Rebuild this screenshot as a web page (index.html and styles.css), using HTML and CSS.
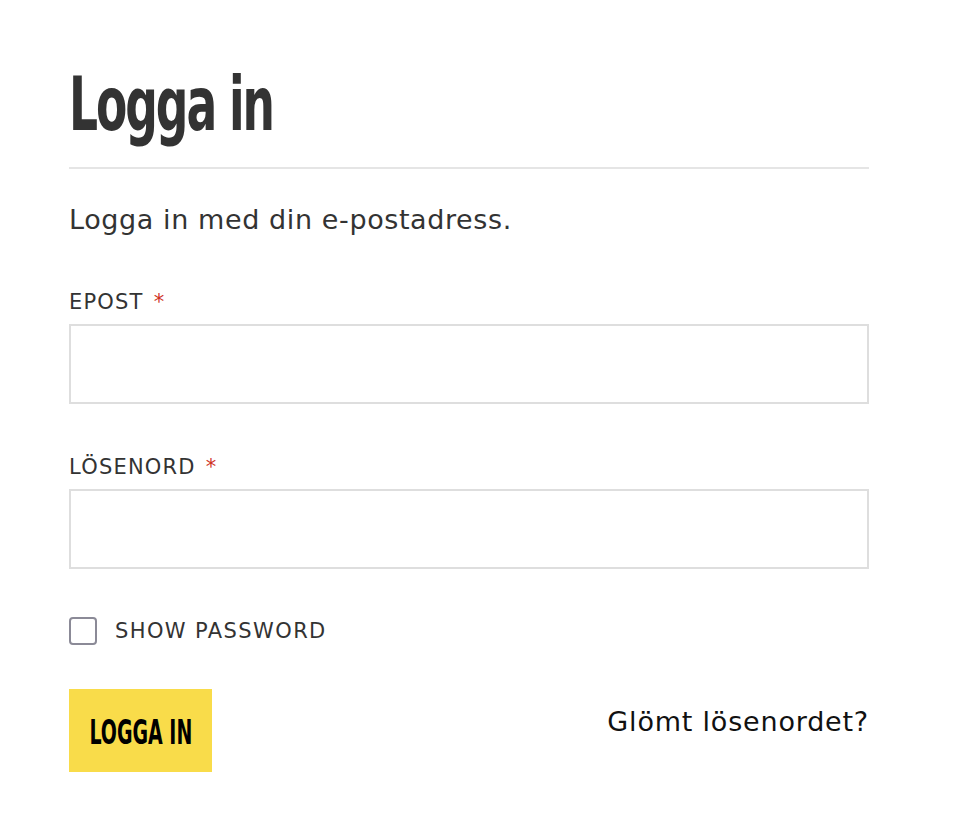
FILE: index.html
```html
<!DOCTYPE html>
<html lang="sv">
<head>
<meta charset="utf-8">
<title>Logga in</title>
<link rel="stylesheet" href="styles.css">
</head>
<body>
<main class="page">
  <h1 class="title"><span class="title-text">Logga in</span></h1>
  <hr class="divider">
  <p class="intro">Logga in med din e-postadress.</p>
  <form class="form">
    <div class="field">
      <label class="label" for="email">EPOST<span class="req">*</span></label>
      <input class="input" id="email" type="email">
    </div>
    <div class="field">
      <label class="label" for="pw">LÖSENORD<span class="req">*</span></label>
      <input class="input" id="pw" type="password">
    </div>
    <label class="check">
      <span class="box"></span>
      <span class="check-text">SHOW PASSWORD</span>
    </label>
    <div class="actions">
      <button class="btn" type="button"><span class="btn-text">LOGGA IN</span></button>
      <a class="forgot" href="#">Glömt lösenordet?</a>
    </div>
  </form>
</main>
</body>
</html>
```
FILE: styles.css
```css
html, body {
  margin: 0;
  padding: 0;
  background: #fff;
}
body {
  font-family: "DejaVu Sans", sans-serif;
  color: #333;
}
.page {
  width: 800px;
  padding: 56px 0 0 69px;
}
.title {
  margin: 0;
  font-family: "DejaVu Sans Condensed", sans-serif;
  font-weight: 700;
  font-size: 74px;
  line-height: 96px;
  color: #333;
  white-space: nowrap;
}
.title-text {
  display: inline-block;
  letter-spacing: -3px;
  transform: scaleX(0.685);
  transform-origin: left center;
}
.divider {
  margin: 15px 0 0;
  border: 0;
  height: 2px;
  background: #e5e5e5;
}
.intro {
  margin: 31px 0 0;
  font-size: 27px;
  line-height: 40px;
  letter-spacing: 0.6px;
  color: #333;
}
.form {
  display: flex;
  flex-direction: column;
}
.field {
  display: flex;
  flex-direction: column;
  margin-top: 47px;
}
.field + .field {
  margin-top: 48px;
}
.label {
  font-size: 21px;
  line-height: 30px;
  letter-spacing: 1.2px;
  margin-bottom: 7px;
  color: #333;
}
.req {
  color: #d0321f;
  margin-left: 10px;
}
.input {
  box-sizing: border-box;
  height: 80px;
  border: 2px solid #dedede;
  margin: 0;
  font: inherit;
}
.check {
  display: flex;
  align-items: center;
  gap: 18px;
  margin-top: 48px;
}
.box {
  box-sizing: border-box;
  width: 28px;
  height: 28px;
  border: 2px solid #8b8a97;
  border-radius: 4px;
}
.check-text {
  font-size: 21px;
  letter-spacing: 1.4px;
  color: #333;
}
.actions {
  display: flex;
  justify-content: space-between;
  align-items: flex-start;
  margin-top: 44px;
}
.btn {
  display: flex;
  justify-content: center;
  align-items: center;
  width: 143px;
  height: 83px;
  border: 0;
  background: #f9dc4a;
  color: #000;
  font-family: "DejaVu Sans Condensed", sans-serif;
  font-weight: 700;
  font-size: 34px;
  padding: 3px 0 0;
  white-space: nowrap;
  overflow: visible;
}
.btn-text {
  display: inline-block;
  flex: none;
  transform: scaleX(0.62);
  transform-origin: center;
}
.forgot {
  font-size: 27px;
  line-height: 40px;
  letter-spacing: 0.8px;
  color: #111;
  text-decoration: none;
  margin-top: 13px;
}
```
